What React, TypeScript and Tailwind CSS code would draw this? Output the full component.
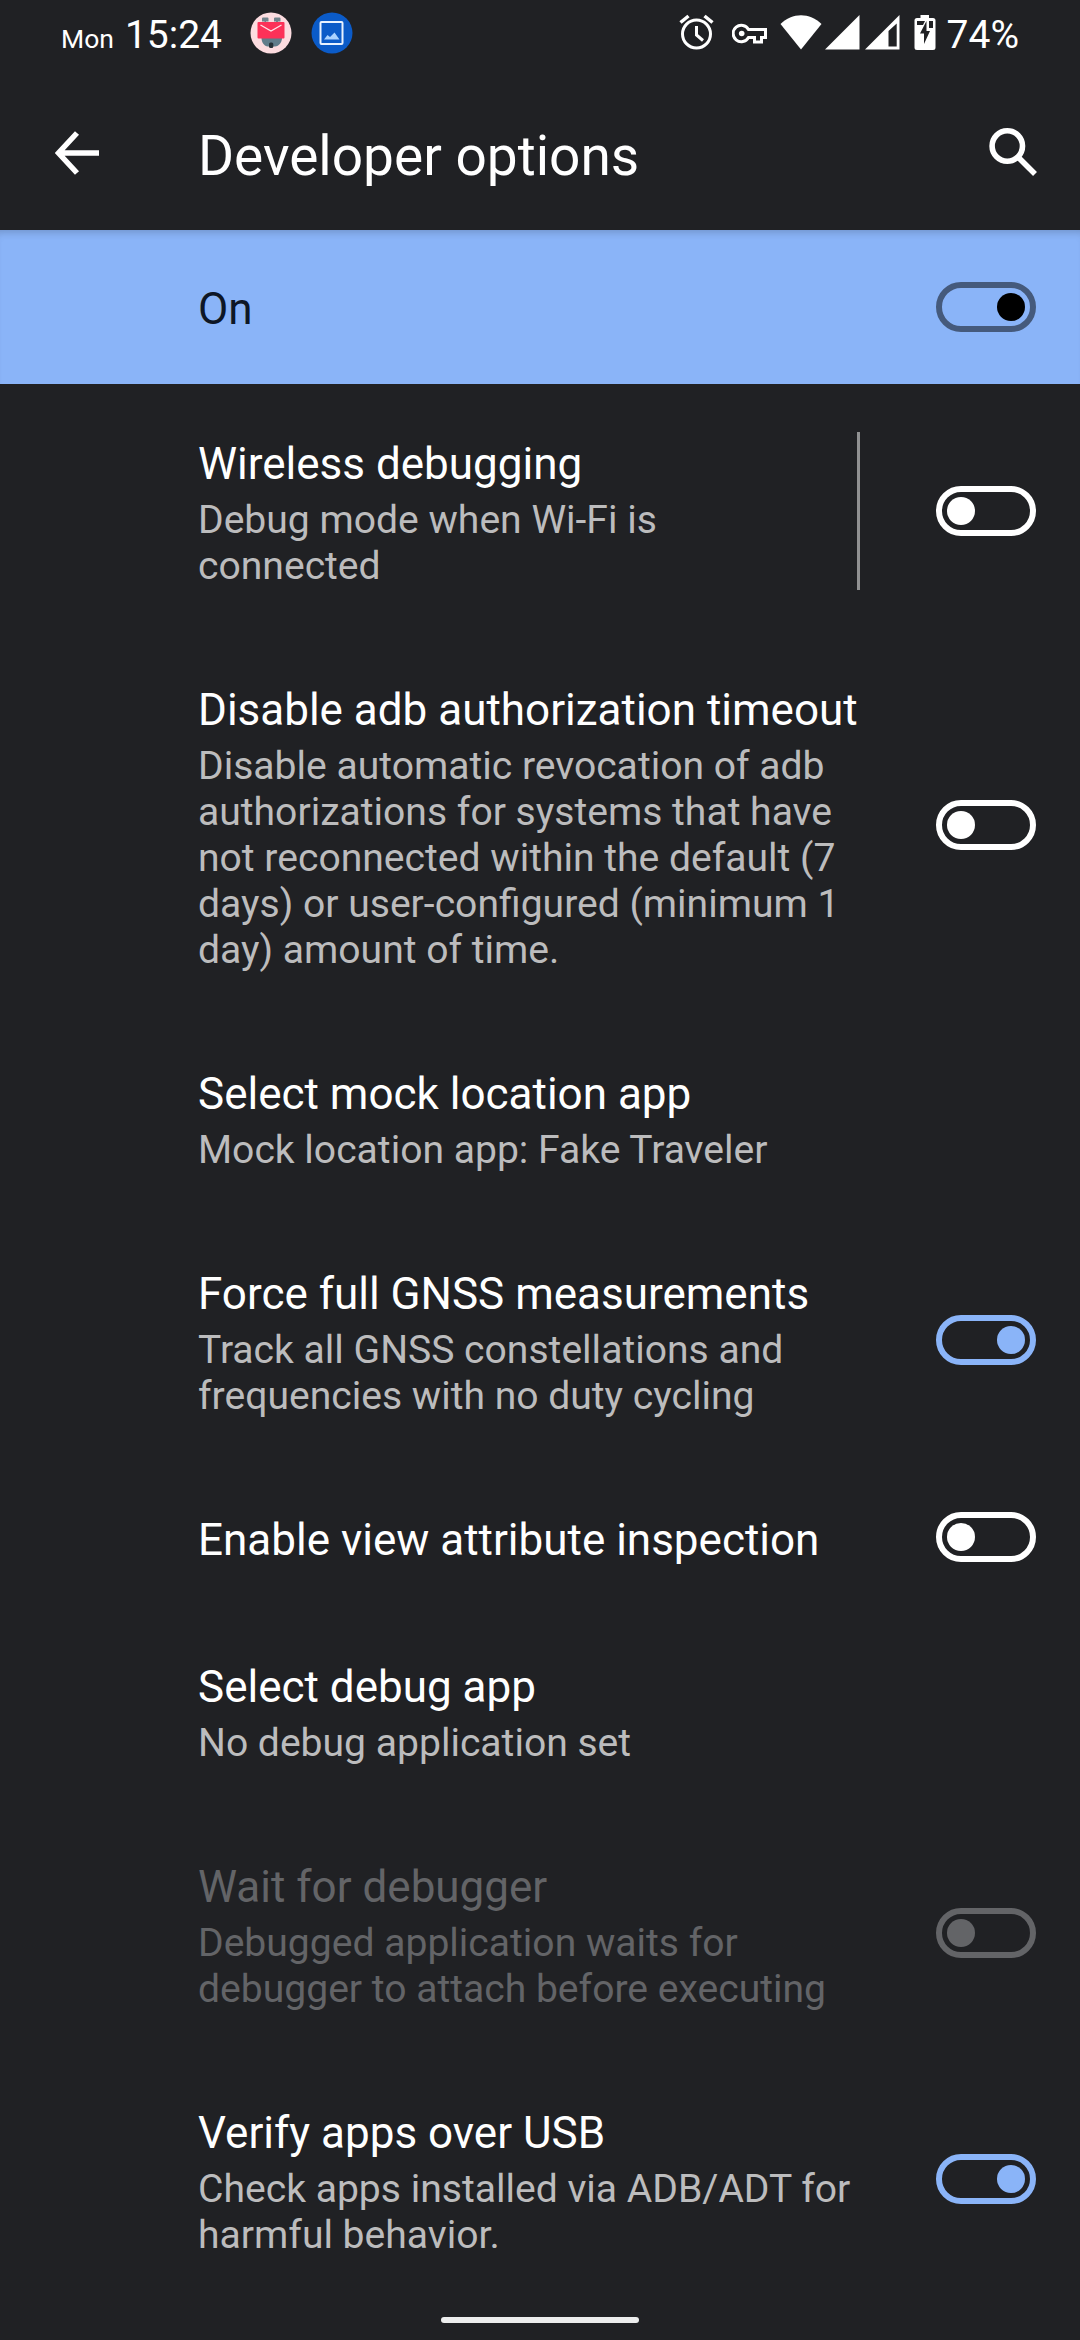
import React from "react";

type Tone = "off" | "on" | "disabled" | "master";

const trackTone: Record<Tone, string> = {
  off: "border-white justify-start",
  on: "border-[#8ab4f8] justify-end",
  disabled: "border-[#636467] justify-start",
  master: "border-[#455a7c] justify-end",
};

const thumbTone: Record<Tone, string> = {
  off: "bg-white",
  on: "bg-[#8ab4f8]",
  disabled: "bg-[#636467]",
  master: "bg-black",
};

function Toggle({ tone }: { tone: Tone }) {
  return (
    <div className={`flex h-[50px] w-[100px] shrink-0 items-center rounded-full border-[6px] px-[5px] ${trackTone[tone]}`}>
      <div className={`size-7 rounded-full ${thumbTone[tone]}`} />
    </div>
  );
}

interface Option {
  title: string;
  lines?: string[];
  tone?: Tone;
  divider?: boolean;
}

const options: Option[] = [
  { title: "Wireless debugging", lines: ["Debug mode when Wi-Fi is", "connected"], tone: "off", divider: true },
  {
    title: "Disable adb authorization timeout",
    lines: [
      "Disable automatic revocation of adb",
      "authorizations for systems that have",
      "not reconnected within the default (7",
      "days) or user-configured (minimum 1",
      "day) amount of time.",
    ],
    tone: "off",
  },
  { title: "Select mock location app", lines: ["Mock location app: Fake Traveler"] },
  {
    title: "Force full GNSS measurements",
    lines: ["Track all GNSS constellations and", "frequencies with no duty cycling"],
    tone: "on",
  },
  { title: "Enable view attribute inspection", tone: "off" },
  { title: "Select debug app", lines: ["No debug application set"] },
  {
    title: "Wait for debugger",
    lines: ["Debugged application waits for", "debugger to attach before executing"],
    tone: "disabled",
  },
  { title: "Verify apps over USB", lines: ["Check apps installed via ADB/ADT for", "harmful behavior."], tone: "on" },
];

function Row({ title, lines, tone, divider }: Option) {
  const disabled = tone === "disabled";
  return (
    <div className="flex items-center py-[44px] pr-[44px] pl-[198px]">
      <div className="min-w-0 flex-1 whitespace-nowrap">
        <div className={`h-[59px] text-[44px] leading-[64px] ${disabled ? "text-[#636467]" : "text-white"}`}>{title}</div>
        {lines && (
          <div className={`pt-[6px] pb-px text-[39.1px] leading-[46px] ${disabled ? "text-[#636467]" : "text-[#bcbcbd]"}`}>
            {lines.map((line) => (
              <div key={line}>{line}</div>
            ))}
          </div>
        )}
      </div>
      {divider && <div className="mr-[76px] w-[3px] self-stretch bg-[#909192]" />}
      {tone && (
        <div className={divider ? "" : "pb-[2px]"}>
          <Toggle tone={tone} />
        </div>
      )}
    </div>
  );
}

function StatusBar() {
  return (
    <div className="flex h-[66px] items-center px-[61px] text-white">
      <div className="flex w-[161px] items-baseline pt-1 leading-[62px]">
        <span className="w-[65px] text-[26.5px] leading-none">Mon</span>
        <span className="text-[39px]">15:24</span>
      </div>
      <svg className="ml-[28px] size-[42px]" viewBox="0 0 42 42">
        <circle cx="21" cy="21" r="20.5" fill="#fcdce0" />
        <path d="M11.500 26H32C32 30 29 34.500 25 34.500H18C14 34.500 11.500 30 11.500 26Z" fill="#607d8b" />
        <path d="M12 6.500Q12 5.500 13 5.500H17.500Q18.500 5.500 18.500 6.500V9.500H16V11.500H14.500V9.500H12ZM24 6.500Q24 5.500 25 5.500H29.500Q30.500 5.500 30.500 6.500V9.500H28V11.500H26V9.500H24Z" fill="#71838c" />
        <rect x="7.500" y="10" width="27" height="16.500" rx="1" fill="#fc3158" />
        <path d="M10.500 13L21 19L31.500 13" fill="none" stroke="#ffe5e9" strokeWidth="1.3" />
        <rect x="19" y="30.500" width="4.300" height="5.500" rx="1.500" fill="#263238" />
      </svg>
      <svg className="ml-[19px] size-[42px]" viewBox="0 0 42 42">
        <circle cx="21" cy="21" r="20.500" fill="#0b5bc8" />
        <rect x="9.500" y="10" width="22" height="22" rx="1" fill="none" stroke="#e8f2ff" strokeWidth="2" />
        <path d="M13 27.500L16.500 23L19 25L23.500 20.500L28.500 27.500Z" fill="#a9d2ff" />
      </svg>
      <div className="flex-1" />
      <svg className="mb-[2px] h-[36px] w-[36px]" viewBox="0 0 36 36" fill="none" stroke="white">
        <circle cx="17.500" cy="20" r="14" strokeWidth="3" />
        <path d="M17.500 12V21L24 26.500" strokeWidth="3" />
        <path d="M1.500 8.500L9.500 2M33.500 8.500L25.500 2" strokeWidth="3.500" />
      </svg>
      <svg className="ml-[17px] h-[36px] w-[36px]" viewBox="0 0 36 36" fill="none" stroke="white" strokeWidth="3">
        <path d="M16.500 14.500A8.200 8.200 0 1 0 16.500 22.500H22.500V27H29.500V22.500H33.500V14.500Z" />
        <circle cx="9.700" cy="18.500" r="2.800" fill="white" stroke="none" />
      </svg>
      <svg className="mb-[2px] ml-[12px] h-[36px] w-[42px]" viewBox="0 0 42 36">
        <path d="M.5 10C12-1.700 30-1.700 41.500 10L21 35.500Z" fill="white" />
      </svg>
      <svg className="mb-[2px] ml-[3px] h-[36px] w-[35px]" viewBox="0 0 35 36">
        <path d="M0 35.500L34.500 1V35.500Z" fill="white" />
      </svg>
      <svg className="mb-[2px] ml-[5px] h-[36px] w-[35px]" viewBox="0 0 35 36">
        <path fillRule="evenodd" d="M0 35.500L34.500 1V35.500ZM23.500 17V32.500H31.700V9.500Z" fill="white" />
      </svg>
      <svg className="mb-[2px] ml-[14px] h-[36px] w-[22px]" viewBox="0 0 22 36">
        <path
          fillRule="evenodd"
          d="M6.500 1H15V4H19Q21.500 4 21.500 6.500V33.500Q21.500 36 19 36H3Q.5 36 .5 33.500V6.500Q.5 4 3 4H6.500ZM12.500 7L6 19.500H10V30L16 17H12.500Z"
          fill="#fff"
        />
        <path d="M3 7H11L9 11H3ZM15 7H19V14H15Z" fill="#202124" />
      </svg>
      <span className="ml-[11px] pt-1 text-[39px] leading-[62px]">74%</span>
    </div>
  );
}

export default function App() {
  return (
    <div className="relative h-[2340px] w-[1080px] overflow-hidden bg-[#202124] font-[Roboto,sans-serif]">
      <StatusBar />
      <header className="flex h-[164px] items-center pt-[16px] pr-[42px] pl-[55px] text-white">
        <svg className="-mt-[6px] size-[44px]" viewBox="0 0 44 44" fill="none" stroke="white" strokeWidth="5.500">
          <path d="M44 22H4M22 2L3.500 22L22 42" />
        </svg>
        <h1 className="ml-[99px] flex-1 text-[55px] leading-[66px] font-normal">Developer options</h1>
        <svg className="-mt-[6px] size-[50px]" viewBox="0 0 50 50" fill="none" stroke="white">
          <circle cx="19.300" cy="18" r="15.200" strokeWidth="5.600" />
          <path d="M29 28L47 46" strokeWidth="5.500" />
        </svg>
      </header>
      <div className="flex h-[154px] items-center bg-[#8ab4f8] pr-[44px] pl-[198px] shadow-[inset_0_8px_8px_-6px_rgba(0,0,0,0.2)]">
        <span className="flex-1 pt-[4px] text-[44px] leading-[60px] text-[#0e1726]">On</span>
        <Toggle tone="master" />
      </div>
      <main className="pt-1">
        {options.map((o) => (
          <Row key={o.title} {...o} />
        ))}
      </main>
      <div className="absolute bottom-[17px] left-[441px] h-[6px] w-[198px] rounded-full bg-[#eceded]" />
    </div>
  );
}
